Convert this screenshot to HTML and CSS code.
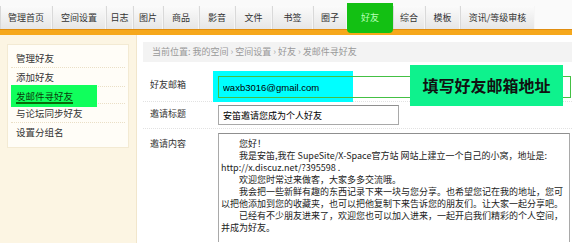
FILE: index.html
```html
<!DOCTYPE html>
<html lang="zh-CN">
<head>
    <meta charset="UTF-8">
    <title>发邮件寻好友</title>
    <link rel="stylesheet" href="styles.css">
</head>
<body>
    <div class="top">
        <ul class="tabs">
            <li style="width:52px">管理首页</li>
            <li style="width:54px">空间设置</li>
            <li style="width:27px">日志</li>
            <li style="width:30px">图片</li>
            <li style="width:36px">商品</li>
            <li style="width:36px">影音</li>
            <li style="width:37px">文件</li>
            <li style="width:41px">书签</li>
            <li style="width:34px">圈子</li>
            <li class="active" style="width:46px">好友</li>
            <li style="width:32px">综合</li>
            <li style="width:35px">模板</li>
            <li style="width:75px">资讯/等级审核</li>
        </ul>
    </div>
    <div class="orange"></div>

    <div class="page">
        <div class="side">
            <ul class="side-box">
                <li>管理好友</li>
                <li>添加好友</li>
                <li class="cur"><span class="hl">发邮件寻好友</span></li>
                <li>与论坛同步好友</li>
                <li class="last">设置分组名</li>
            </ul>
        </div>

        <div class="main">
            <div class="crumb">当前位置: 我的空间 <span class="sep">›</span> 空间设置 <span class="sep">›</span> 好友 <span class="sep">›</span> 发邮件寻好友</div>

            <div class="row row-first">
                <span class="label">好友邮箱</span>
                <div class="field">
                    <div class="mark"></div>
                    <input type="text" class="email" value="waxb3016@gmail.com">
                    <div class="callout">填写好友邮箱地址</div>
                </div>
            </div>
            <div class="row">
                <span class="label">邀请标题</span>
                <div class="field">
                    <input type="text" class="title" value="安笛邀请您成为个人好友">
                </div>
            </div>
            <div class="row row-last">
                <span class="label">邀请内容</span>
                <div class="field">
                    <textarea wrap="off">　　您好！
　　我是安笛,我在 SupeSite/X-Space官方站 网站上建立一个自己的小窝，地址是:
http://x.discuz.net/?395598 .
　　欢迎您时常过来做客，大家多多交流哦。
　　我会把一些新鲜有趣的东西记录下来一块与您分享。也希望您记在我的地址，您可
以把他添加到您的收藏夹，也可以把他复制下来告诉您的朋友们。让大家一起分享吧。
　　已经有不少朋友进来了，欢迎您也可以加入进来，一起开启我们精彩的个人空间，
并成为好友。</textarea>
                </div>
            </div>
        </div>
    </div>
</body>
</html>
```

FILE: styles.css
```css
body {
    margin: 0;
    width: 572px;
    height: 243px;
    overflow: hidden;
    background: #fff;
    font-family: "Noto Sans CJK SC", "Liberation Sans", sans-serif;
    font-size: 9px;
    color: #333;
}
ul {
    margin: 0;
    padding: 0;
    list-style: none;
}
.top {
    padding-top: 6px;
    background: #fafafa;
}
.tabs {
    display: flex;
    height: 23px;
}
.tabs li {
    box-sizing: border-box;
    height: 23px;
    line-height: 23px;
    text-align: center;
    background: linear-gradient(#fbfbfb, #e6e6e6);
    border-right: 1px solid #f6f6f6;
    border-left: 1px solid #d9d9d9;
    white-space: nowrap;
}
.tabs li.active {
    position: relative;
    z-index: 2;
    align-self: flex-start;
    height: 30px;
    margin-top: -3px;
    padding-top: 3px;
    background: #13c013;
    color: #b8ffb8;
    border: none;
    border-radius: 0 0 4px 4px;
}
.orange {
    height: 6px;
    box-sizing: border-box;
    background: #f6a81c;
    border-top: 1px solid #e08d10;
}
.page {
    display: flex;
    height: 208px;
    overflow: hidden;
}
.side {
    width: 137px;
    box-sizing: border-box;
    padding: 9px 7px 0;
    background: #fcf5e3;
    border-right: 1px solid #f1e6cc;
}
.side-box {
    background: #fffdf7;
    border: 1px solid #f3ead3;
    padding: 4px 3px 5px;
    font-size: 9.5px;
}
.side-box li {
    height: 19px;
    line-height: 19px;
    padding-left: 5px;
    border-bottom: 1px dotted #eadfc6;
    box-sizing: border-box;
}
.side-box li.last {
    border-bottom: none;
}
.side-box .hl {
    display: block;
    width: 81px;
    height: 22px;
    line-height: 22px;
    margin: -2px 0 0 -5px;
    padding-left: 5px;
    background: #10ff5c;
    color: #0b3d0b;
    text-decoration: underline;
    text-decoration-color: #0a6a0a;
    text-decoration-thickness: 2px;
    text-underline-offset: 2px;
}
.main {
    flex: 1;
    padding: 7px 0 0 6px;
}
.crumb {
    height: 20px;
    line-height: 20px;
    padding-left: 9px;
    background: #f3f3f3;
    color: #999;
    white-space: nowrap;
}
.crumb .sep {
    color: #aaa;
}
.row {
    display: flex;
    align-items: flex-start;
    padding: 3px 0;
    border-bottom: 1px dotted #e2e2e2;
}
.row-first {
    padding-top: 14px;
}
.row-last {
    padding: 4px 0 0;
    border-bottom: none;
}
.label {
    width: 75px;
    box-sizing: border-box;
    padding: 3px 0 0 7px;
    line-height: 12px;
    color: #333;
}
.row-last .label {
    padding-top: 5px;
}
.field {
    position: relative;
    flex: 1;
}
input {
    display: block;
    box-sizing: border-box;
    margin: 0;
    padding: 0 0 0 4px;
    color: #000;
    outline: none;
}
.email {
    position: relative;
    z-index: 1;
    width: 353px;
    height: 22px;
    background: transparent;
    border: 1px solid #44c044;
    font-family: "Liberation Sans", sans-serif;
    font-size: 9.5px;
}
.mark {
    position: absolute;
    left: -5px;
    top: -5px;
    width: 140px;
    height: 31px;
    background: #00ffff;
}
.callout {
    position: absolute;
    z-index: 2;
    left: 192px;
    top: -11px;
    width: 153px;
    height: 41px;
    line-height: 41px;
    text-align: center;
    background: #0ef28d;
    color: #111;
    font-size: 16px;
    font-weight: bold;
}
.title {
    width: 181px;
    height: 20px;
    border: 1px solid #a9a9a9;
    border-top-color: #8f8f8f;
    font-size: 9px;
    font-family: "Noto Sans CJK SC", sans-serif;
}
textarea {
    display: block;
    box-sizing: border-box;
    width: 352px;
    height: 109px;
    margin: 0;
    padding: 4px 2px;
    border: 1px solid #a9a9a9;
    border-top-color: #8f8f8f;
    border-bottom: none;
    font-family: "Noto Sans CJK SC", "Liberation Sans", sans-serif;
    font-size: 9px;
    line-height: 12px;
    color: #222;
    resize: none;
    overflow: hidden;
    outline: none;
}
```
